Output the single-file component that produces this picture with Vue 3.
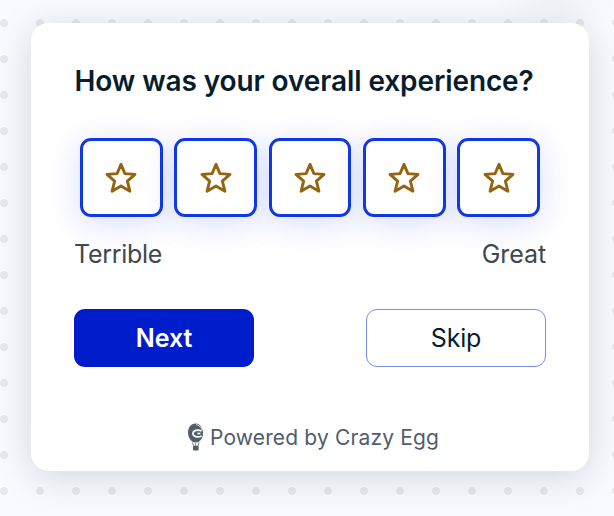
<template>
  <div class="page">
    <div class="survey-card">
      <h1 class="question">How was your overall experience?</h1>

      <div class="ratings">
        <button
          v-for="n in 5"
          :key="n"
          class="rating-btn"
          :class="{ selected: n <= rating }"
          @click="rating = n"
        >
          <svg class="star" viewBox="0 0 32 32">
            <path d="M16 2.4 L19.9 11.6 L30 12.4 L22.4 19.1 L24.9 29.2 L16 23.9 L7.1 29.2 L9.6 19.1 L2 12.4 L12.1 11.6 Z" />
          </svg>
        </button>
      </div>

      <div class="labels">
        <span class="label-low">Terrible</span>
        <span class="label-high">Great</span>
      </div>

      <div class="actions">
        <button class="btn btn-next">Next</button>
        <button class="btn btn-skip">Skip</button>
      </div>

      <div class="powered">
        <svg class="balloon" viewBox="0 0 16 28">
          <path d="M7.5 0.5 C12 0.5 15 5 15 10.5 C15 15 12 18.2 10 19.3 H5.5 C3 18 0 14.5 0 9.5 C0 4.5 3 0.5 7.5 0.5 Z" />
          <path class="swoosh" d="M8 1.6 C11 2 13 4 14.2 7" />
          <path class="mark" d="M13.6 8 C9.5 6 5 7.4 5 10.5 C5 13.6 9.5 15 13.6 13" />
          <path class="mark" d="M12.4 10.5 H9.4" />
          <path class="ropes" d="M4.5 19.5 L5.7 23.5 M7.7 19.5 V23.5 M11 19.5 L9.8 23.5" />
          <rect x="5" y="22.8" width="5.6" height="4.8" rx="0.8" />
        </svg>
        <span>Powered by Crazy Egg</span>
      </div>
    </div>
  </div>
</template>

<script setup>
import { ref } from 'vue'

const rating = ref(0)
</script>

<style>
body {
  margin: 0;
}
</style>

<style scoped>
.page {
  box-sizing: border-box;
  height: 516px;
  padding: 23px 25px 0 31px;
  overflow: hidden;
  background-color: #f9faff;
  background-image:
    radial-gradient(ellipse 60px 34px at 556px 0, rgba(0, 0, 0, 0.03), transparent),
    radial-gradient(circle, #e6e8ec 3.7px, transparent 4.2px);
  background-size: auto, 36px 36px;
  background-position: 0 0, -14px 5px;
  background-repeat: no-repeat, repeat;
  font-family: Inter, "Liberation Sans", sans-serif;
}

.survey-card {
  box-sizing: border-box;
  height: 448px;
  padding: 40px 43px 0;
  display: flex;
  flex-direction: column;
  background: #fff;
  border-radius: 18px;
  box-shadow: 0 6px 38px rgba(0, 0, 0, 0.15);
}

.question {
  margin: 0 0 0 0.5px;
  font-size: 28px;
  line-height: 36px;
  font-weight: 600;
  letter-spacing: -0.1px;
  color: #071d2e;
  white-space: nowrap;
}

.ratings {
  display: flex;
  justify-content: space-between;
  margin: 39px 6px 0;
}

.rating-btn {
  box-sizing: border-box;
  width: 82.6px;
  height: 79px;
  padding: 0;
  display: flex;
  align-items: center;
  justify-content: center;
  background: #fff;
  border: 3px solid #1039e6;
  border-radius: 11px;
  box-shadow: 0 6px 32px rgba(16, 40, 230, 0.16);
  cursor: pointer;
}

.star {
  width: 32px;
  height: 32px;
  fill: none;
  stroke: #936512;
  stroke-width: 2.9;
  stroke-linejoin: round;
}

.rating-btn.selected .star {
  fill: #936512;
}

.labels {
  display: flex;
  justify-content: space-between;
  margin-top: 21px;
  font-size: 25px;
  line-height: 32px;
  color: #40484c;
}

.label-low {
  letter-spacing: -0.3px;
}

.label-high {
  letter-spacing: -0.1px;
}

.actions {
  display: flex;
  justify-content: space-between;
  margin-top: 39px;
}

.btn {
  box-sizing: border-box;
  width: 180px;
  height: 58px;
  padding: 0;
  border-radius: 11px;
  font-family: inherit;
  font-size: 25px;
  cursor: pointer;
}

.btn-next {
  border: none;
  background: #001dcb;
  color: #fff;
  font-weight: 600;
  letter-spacing: -0.1px;
}

.btn-skip {
  border: 1px solid #7a8df0;
  background: #fff;
  color: #071d2e;
  letter-spacing: -0.2px;
}

.powered {
  display: flex;
  align-items: center;
  justify-content: center;
  gap: 6px;
  margin-top: 56px;
  padding-left: 7px;
  font-size: 21px;
  line-height: 28px;
  letter-spacing: 0.15px;
  color: #505d6a;
}

.balloon {
  width: 16px;
  height: 28px;
  margin-bottom: 2px;
  fill: #505d6a;
}

.swoosh,
.mark,
.ropes {
  fill: none;
  stroke: #fff;
  stroke-width: 0.8;
}

.mark {
  stroke-width: 1.7;
}

.ropes {
  stroke: #505d6a;
}
</style>
